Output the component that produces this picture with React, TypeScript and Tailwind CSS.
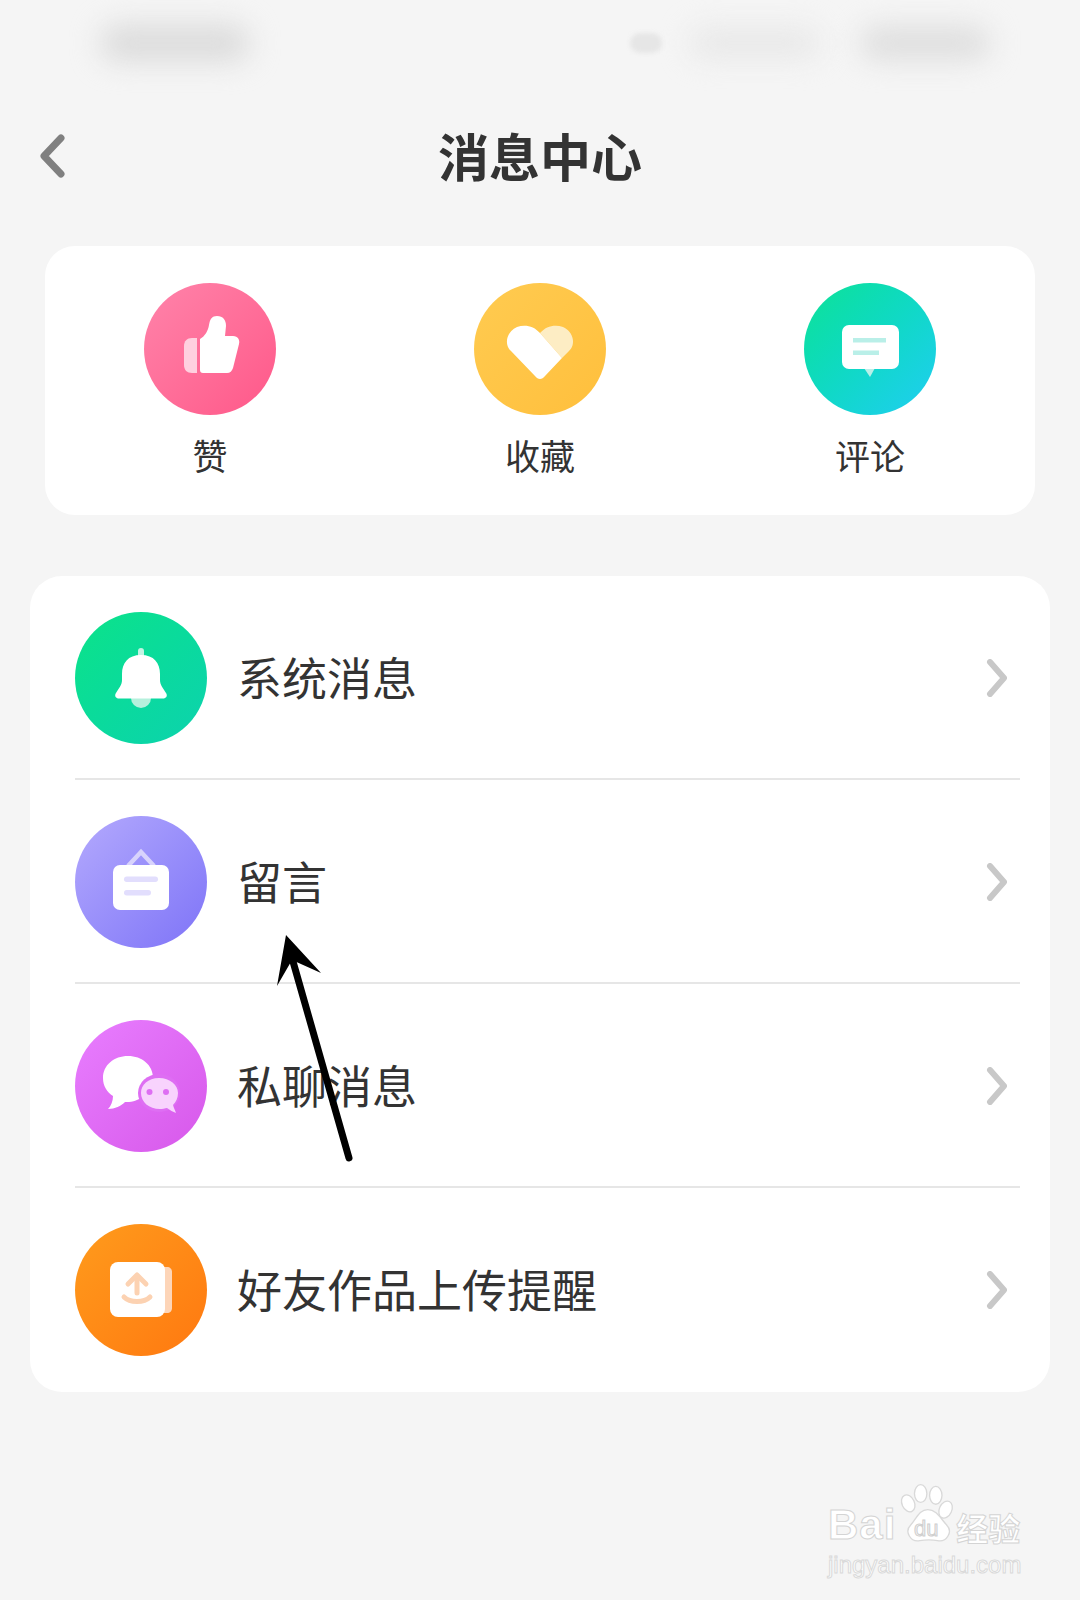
import React from 'react'

const ThumbIcon = () => (
  <svg viewBox="0 0 132 132" className="h-full w-full">
    <path d="M53 55 H48 C43 55 40 58 40 63 V82 C40 87 43 90 48 90 H53 Z" fill="#ffd0df" />
    <path
      d="M56 56 C61 53 64 48 65 42 C66 36 68 33 73 33 C79 33 82 37 82 43 L81 53 H89 C94 53 96 57 95 61 L89 85 C88 88 86 90 83 90 H59 C57 90 56 89 56 87 Z"
      fill="#fff"
    />
  </svg>
)

const HeartIcon = () => (
  <svg viewBox="0 0 132 132" className="h-full w-full">
    <path d="M66 50 C72 43 81 41 89 44 C100 49 102 62 95 68 L88 75 Z" fill="#fdedc4" />
    <path
      d="M66 50 L88 75 L71 93 C68 97 64 97 61 93 L37 68 C30 62 32 49 43 44 C51 41 60 43 66 50 Z"
      fill="#fff"
    />
  </svg>
)

const CommentIcon = () => (
  <svg viewBox="0 0 132 132" className="h-full w-full">
    <path d="M60 85 H71 L66 94 Z" fill="#b9efe8" />
    <rect x="38" y="42" width="57" height="44" rx="7" fill="#fff" />
    <rect x="49" y="55" width="33" height="4.5" fill="#b9efe8" />
    <rect x="49" y="67.5" width="26" height="4.5" fill="#b9efe8" />
  </svg>
)

const BellIcon = () => (
  <svg viewBox="0 0 132 132" className="h-full w-full">
    <rect x="63" y="36" width="6" height="12" rx="3" fill="#c4f4e4" />
    <path d="M56 86 A10 10 0 0 0 76 86 Z" fill="#b5f0dc" />
    <path
      d="M66 43 C53 43 47 51 47 62 V68 C47 73 44 76 41 81 C39 84 41 86.5 44 86.5 H88 C91 86.5 93 84 91 81 C88 76 85 73 85 68 V62 C85 51 79 43 66 43 Z"
      fill="#fff"
    />
  </svg>
)

const BoardIcon = () => (
  <svg viewBox="0 0 132 132" className="h-full w-full">
    <path d="M53 50 L66 36 L79 50" fill="none" stroke="#d8d3fc" strokeWidth="4.5" />
    <rect x="38" y="49" width="56" height="45" rx="7" fill="#fff" />
    <rect x="49" y="60.5" width="34" height="5.5" rx="2.7" fill="#e2defd" />
    <rect x="49" y="74" width="27" height="5.5" rx="2.7" fill="#e2defd" />
  </svg>
)

const ChatIcon = () => (
  <svg viewBox="0 0 132 132" className="h-full w-full">
    <path
      d="M53 36 C39 36 28 45 28 58 C28 66 32 72 38 76 C38 81 36 86 33 89 C40 89 46 86 50 82 C62 83 78 74 78 58 C78 45 67 36 53 36 Z"
      fill="#fff"
    />
    <ellipse cx="84" cy="73" rx="21" ry="19" fill="#de6ef3" />
    <path
      d="M84 58 C73 58 66 65 66 73 C66 82 74 89 85 89 C87 89 90 88.5 92 88 C95 90 98 92 101 93 C100 90 98.5 87 98 85 C101 82 103 78 103 73 C103 65 95 58 84 58 Z"
      fill="#f8d3fd"
    />
    <circle cx="74.5" cy="72" r="3" fill="#de6ef3" />
    <circle cx="91" cy="72" r="3" fill="#de6ef3" />
  </svg>
)

const UploadIcon = () => (
  <svg viewBox="0 0 132 132" className="h-full w-full">
    <path d="M88 43 H92 C95 43 97 45 97 48 V84 C97 87 95 89 92 89 H88 Z" fill="#fdd5b8" />
    <rect x="35" y="38" width="55" height="55" rx="8" fill="#fff" />
    <g fill="none" stroke="#fcd2b2" strokeWidth="5" strokeLinecap="round" strokeLinejoin="round">
      <path d="M62 52 V69" />
      <path d="M53 60 L62 51 L71 60" />
      <path d="M49 73 C55 79 69 79 75 73" />
    </g>
  </svg>
)

const Circle = ({ className, children }: { className: string; children: React.ReactNode }) => (
  <div className={`h-[132px] w-[132px] shrink-0 rounded-full ${className}`}>{children}</div>
)

const shortcuts = [
  { label: '赞', bg: 'bg-gradient-to-br from-[#ff83aa] to-[#ff5789]', icon: <ThumbIcon /> },
  { label: '收藏', bg: 'bg-gradient-to-br from-[#ffcb50] to-[#ffbf3c]', icon: <HeartIcon /> },
  { label: '评论', bg: 'bg-gradient-to-br from-[#10e294] to-[#21cdf2]', icon: <CommentIcon /> },
]

const rows = [
  { label: '系统消息', bg: 'bg-gradient-to-br from-[#0ce388] to-[#0dd2ae]', icon: <BellIcon /> },
  { label: '留言', bg: 'bg-gradient-to-br from-[#b4a9fd] to-[#7f73f7]', icon: <BoardIcon /> },
  { label: '私聊消息', bg: 'bg-gradient-to-br from-[#e87eff] to-[#d757ea]', icon: <ChatIcon /> },
  { label: '好友作品上传提醒', bg: 'bg-gradient-to-br from-[#ff9b1c] to-[#ff7810]', icon: <UploadIcon /> },
]

const Watermark = () => (
  <div className="absolute bottom-[22px] right-[58px] flex w-[194px] flex-col text-white">
    <div className="flex items-end">
      <span className="text-[42px] font-bold leading-[42px] tracking-[1px] [-webkit-text-stroke:1px_#d4d4d4] [font-family:'Liberation_Sans',sans-serif]">
        Bai
      </span>
      <div className="relative -mt-[32px] h-[64px] w-[60px] shrink-0">
        <svg viewBox="0 0 62 72" className="h-full w-full">
          <g fill="#fff" stroke="#d9d9d9" strokeWidth="1.5">
            <ellipse cx="11" cy="24" rx="7" ry="10" transform="rotate(-25 11 24)" />
            <ellipse cx="25" cy="13" rx="7" ry="10" />
            <ellipse cx="42" cy="15" rx="7" ry="10" />
            <ellipse cx="53" cy="31" rx="7" ry="10" transform="rotate(25 53 31)" />
            <path d="M33 31 C23 31 20 42 14 48 C6 56 14 68 24 66 C30 65 38 65 44 66 C54 68 62 56 54 48 C48 42 43 31 33 31 Z" />
          </g>
        </svg>
        <span className="absolute inset-x-0 bottom-[6px] text-center text-[22px] leading-[22px] text-[#f5f5f5] [-webkit-text-stroke:1px_#cfcfcf] [font-family:'Liberation_Sans',sans-serif]">
          du
        </span>
      </div>
      <span className="whitespace-nowrap text-[32px] font-bold leading-[38px] [-webkit-text-stroke:1px_#d4d4d4]">
        经验
      </span>
    </div>
    <span className="mt-[6px] whitespace-nowrap text-[24px] leading-[26px] [-webkit-text-stroke:1px_#d9d9d9] [font-family:'Liberation_Sans',sans-serif]">
      jingyan.baidu.com
    </span>
  </div>
)

const App: React.FC = () => {
  return (
    <div className="relative h-[1600px] w-[1080px] overflow-hidden bg-[#f5f5f5] text-[#333] [font-family:'Noto_Sans_CJK_SC',sans-serif]">
      {/* blurred-out status bar */}
      <div className="flex h-[100px] items-center pb-[14px] pl-[100px]">
        <div className="h-[38px] w-[150px] rounded-full bg-[#dcdcdc] blur-[14px]" />
        <div className="ml-[380px] h-[20px] w-[32px] rounded-full bg-[#e6e6e6] blur-[2px]" />
        <div className="ml-[28px] h-[30px] w-[130px] rounded-full bg-[#e8e8e8] blur-[14px]" />
        <div className="ml-[40px] h-[34px] w-[130px] rounded-full bg-[#dedede] blur-[14px]" />
      </div>

      <header className="grid h-[116px] grid-cols-[1fr_auto_1fr] items-center pl-[39px]">
        <svg viewBox="0 0 26 44" className="-mt-[5px] h-[44px] w-[26px]">
          <path d="M22 4 L5 22 L22 40" fill="none" stroke="#808080" strokeWidth="7" strokeLinecap="round" strokeLinejoin="round" />
        </svg>
        <h1 className="-ml-[39px] pb-[5px] text-[51px] font-bold leading-none">消息中心</h1>
      </header>

      <section className="mx-[45px] mt-[30px] grid h-[269px] grid-cols-3 rounded-[30px] bg-white pt-[37px]">
        {shortcuts.map((item) => (
          <div key={item.label} className="flex flex-col items-center">
            <Circle className={item.bg}>{item.icon}</Circle>
            <span className="mt-[17px] text-[35px] leading-[46px]">{item.label}</span>
          </div>
        ))}
      </section>

      <section className="mx-[30px] mt-[61px] rounded-[32px] bg-white pl-[45px] pr-[30px]">
        {rows.map((row) => (
          <div
            key={row.label}
            className="flex h-[204px] items-center border-b-2 border-[#e6e6e6] pr-[13px] pt-[2px] last:border-b-0 last:pt-0"
          >
            <Circle className={row.bg}>{row.icon}</Circle>
            <span className="ml-[30px] flex-1 pb-[3px] text-[45px] leading-none">{row.label}</span>
            <svg viewBox="0 0 22 38" className="h-[38px] w-[22px]">
              <path d="M5 3 L19 19 L5 35" fill="none" stroke="#c8c8c8" strokeWidth="6" strokeLinecap="round" strokeLinejoin="round" />
            </svg>
          </div>
        ))}
      </section>

      {/* annotation arrow */}
      <svg viewBox="0 0 1080 1600" className="pointer-events-none absolute inset-0 h-[1600px] w-[1080px]">
        <path d="M292 958 L349 1158" stroke="#000" strokeWidth="7" strokeLinecap="round" />
        <path d="M286 935 L321 973 L292 960 L277 986 Z" fill="#000" />
      </svg>

      <Watermark />
    </div>
  )
}

export default App
